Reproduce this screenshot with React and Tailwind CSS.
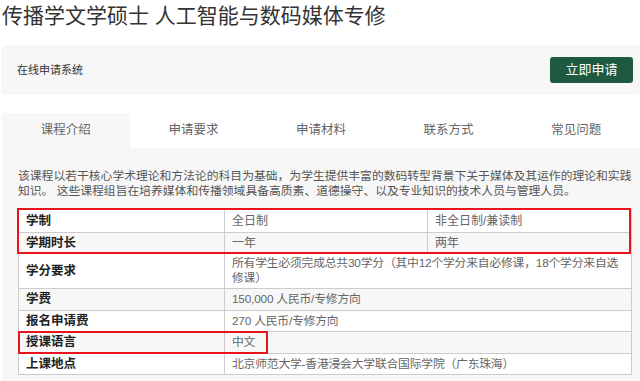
const tabs = ['课程介绍', '申请要求', '申请材料', '联系方式', '常见问题'];

const rows = [
  { label: '学制', cells: ['全日制', '非全日制/兼读制'] },
  { label: '学期时长', cells: ['一年', '两年'] },
  {
    label: '学分要求',
    cells: [
      <>
        所有学生必须完成总共30学分（其中12个学分来自必修课，18个学分来自选
        <br />
        修课）
      </>,
    ],
  },
  { label: '学费', cells: ['150,000 人民币/专修方向'] },
  { label: '报名申请费', cells: ['270 人民币/专修方向'] },
  { label: '授课语言', cells: ['中文'] },
  { label: '上课地点', cells: ['北京师范大学-香港浸会大学联合国际学院（广东珠海）'] },
];

const heights = ['h-[23px]', 'h-[21px]', 'h-[35px]', 'h-[22px]', 'h-[21px]', 'h-[22px]', 'h-[21px]'];

export default function App() {
  return (
    <div className="w-[640px] h-[381px] overflow-hidden bg-white font-['Liberation_Sans','Noto_Sans_CJK_SC',sans-serif]">
      <h1 className="h-[45px] pl-[2px] pt-[2px] text-[21px] leading-[28px] font-normal text-[#333]">
        传播学文学硕士 人工智能与数码媒体专修
      </h1>

      <div className="ml-[1px] h-[50px] flex items-center justify-between rounded bg-[#f7f7f7] pl-[16px] pr-[7px]">
        <span className="text-[11px] text-[#333]">在线申请系统</span>
        <button className="w-[83px] h-[26px] rounded-[3px] bg-[#1d5a3f] text-[13px] text-white">立即申请</button>
      </div>

      <div className="mt-[18px] ml-[2px] flex h-[35px]">
        {tabs.map((t, i) => (
          <div
            key={t}
            className={`flex-1 flex items-center justify-center text-[12.5px] text-[#666] ${i === 0 ? 'bg-[#f7f7f7]' : ''}`}
          >
            {t}
          </div>
        ))}
      </div>

      <div className="ml-[2px] bg-[#f7f7f7] pl-[16px] pr-[8px] pt-[21px] pb-[10px]">
        <p className="text-[11.8px] leading-[15px] text-[#555]">
          该课程以若干核心学术理论和方法论的科目为基础，为学生提供丰富的数码转型背景下关于媒体及其运作的理论和实践知识。 这些课程组旨在培养媒体和传播领域具备高质素、道德操守、以及专业知识的技术人员与管理人员。
        </p>

        <div className="relative mt-[10px]">
          <table className="w-full border-collapse bg-white text-[12.5px]">
            <tbody>
              {rows.map((r, i) => (
                <tr key={r.label} className={`${heights[i]} ${i % 2 === 1 ? 'bg-[#f7f7f7]' : 'bg-white'}`}>
                  <td className="w-[206px] border border-[#ccc] px-[7px] py-0 font-bold text-[#222] leading-[15px]">
                    {r.label}
                  </td>
                  {r.cells.length === 2 ? (
                    <>
                      <td className="w-[203px] border border-[#ccc] px-[7px] text-[12px] text-[#666] leading-[15px]">{r.cells[0]}</td>
                      <td className="border border-[#ccc] px-[7px] text-[12px] text-[#666] leading-[15px]">{r.cells[1]}</td>
                    </>
                  ) : (
                    <td colSpan={2} className="border border-[#ccc] px-[7px] text-[11.8px] text-[#666] leading-[15px] whitespace-nowrap tracking-[-0.2px]">
                      {r.cells[0]}
                    </td>
                  )}
                </tr>
              ))}
            </tbody>
          </table>
          <div className="absolute left-[-1px] top-[-1px] w-[614px] h-[46px] border-2 border-[#e8141b] pointer-events-none" />
          <div className="absolute left-[0px] top-[122px] w-[250px] h-[23px] border-2 border-[#e8141b] pointer-events-none" />
        </div>
      </div>
    </div>
  );
}
